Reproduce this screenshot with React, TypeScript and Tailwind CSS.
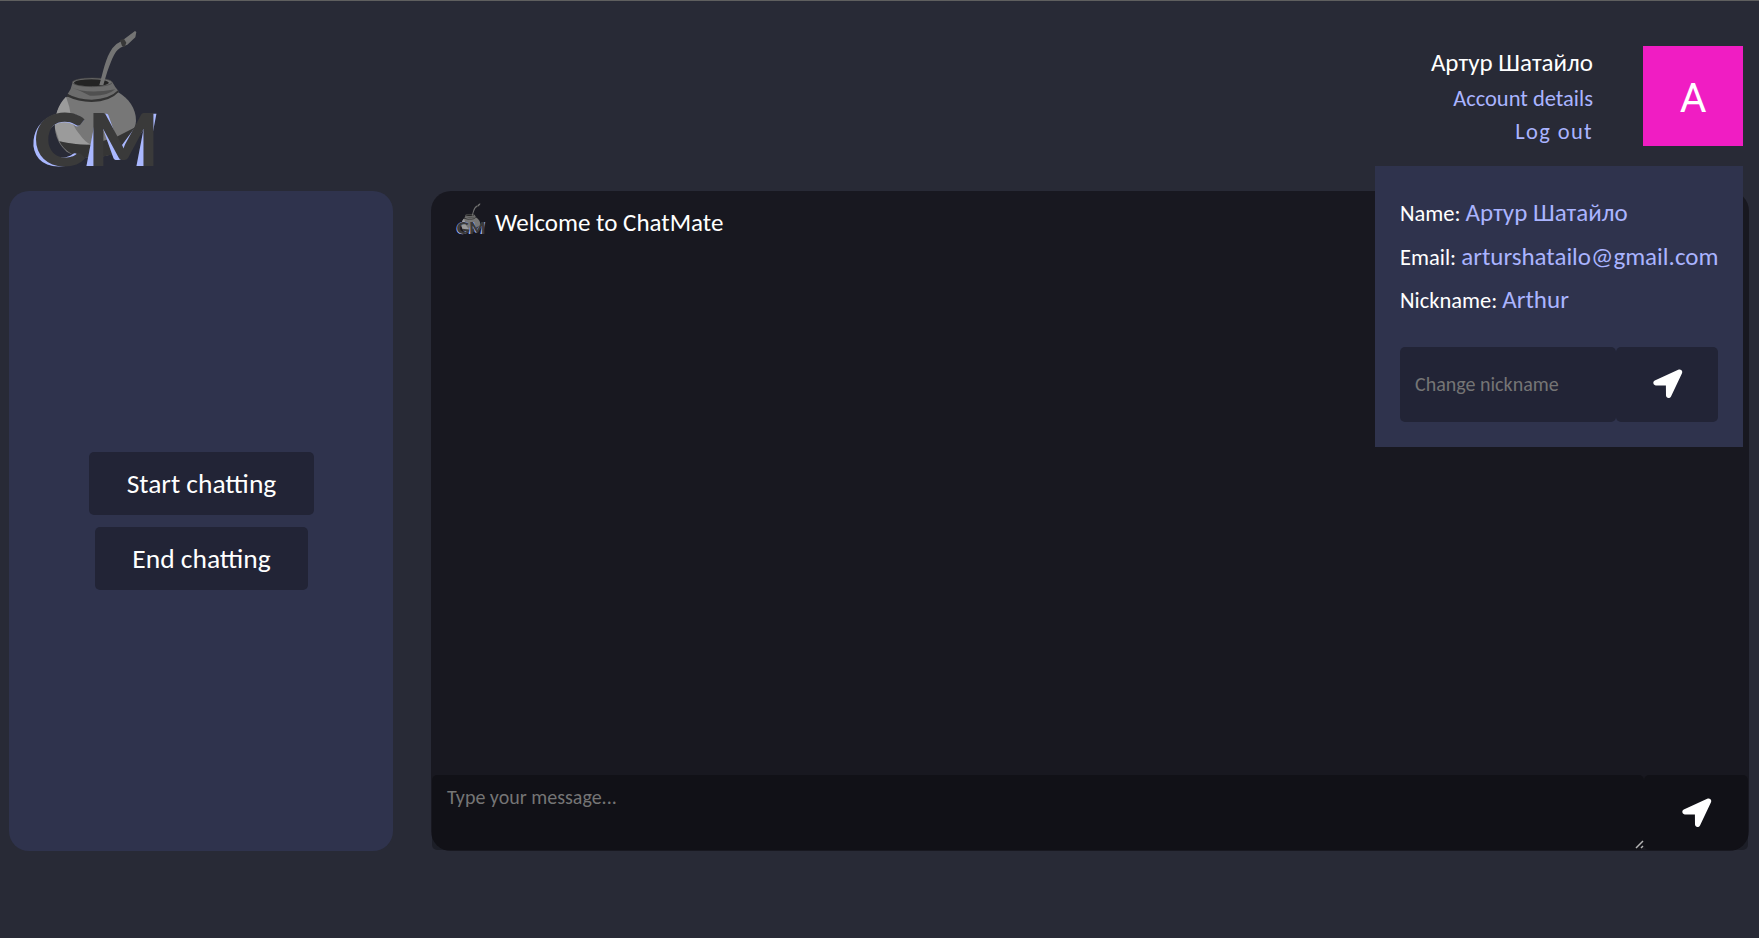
import React from 'react';

function MateLogo({ className }: { className: string }) {
  return (
    <svg viewBox="96 90 372 414" className={className} aria-hidden="true">
      <path d="M200 290 C170 320 160 360 166 395 Q172 430 200 455 C240 480 330 480 370 440 Q408 400 408 362 C408 325 385 295 355 277 Z" fill="#777" />
      <path d="M198 290 Q163 325 165 385 L178 424 Q230 436 274 434 Q258 430 238 402 Q216 375 213 350 Q210 320 198 290 Z" fill="#9b9b9b" />
      <path d="M178 424 Q230 436 272 434 L350 410 L406 382 Q395 436 350 460 Q270 484 215 462 Q190 448 178 424 Z" fill="#353535" />
      <path d="M218 247 Q214 268 203 282 Q235 305 275 305 Q330 303 356 274 Q345 262 337 246 Z" fill="#6c6c6c" />
      <path d="M203 282 Q235 299 275 299 Q330 297 354 271 L356 276 Q330 305 275 306 Q235 306 200 289 Z" fill="#333" />
      <path d="M213 262 Q260 284 346 268 Q320 290 270 287 Q245 274 213 262 Z" fill="#505050" />
      <ellipse cx="277" cy="247" rx="60" ry="13" fill="#707070" stroke="#444" strokeWidth="2" />
      <ellipse cx="274" cy="248" rx="52" ry="10.5" fill="#242424" />
      <path d="M298 255 C310 215 316 175 337 145 Q348 130 365 123 L405 93 L409 96 L406 112 L382 134 Q357 142 348 155 C332 180 320 220 310 255 Z" fill="#747474" />
      <path d="M360 120 L372 117 L379 128 L374 141 L366 138 Z" fill="#383838" />
      <g fontFamily="Lato" fontWeight="900" fontSize="216">
        <g fill="#aab8ff">
          <text transform="translate(-16 497) skewX(-6.2)" x="100" y="0" textLength="158" lengthAdjust="spacingAndGlyphs">C</text>
          <text transform="translate(-21 497) skewX(-10.9)" x="263" y="0" textLength="214" lengthAdjust="spacingAndGlyphs">M</text>
        </g>
        <g fill="#3a3a3a">
          <text x="100" y="497" textLength="158" lengthAdjust="spacingAndGlyphs">C</text>
          <text x="263" y="497" textLength="214" lengthAdjust="spacingAndGlyphs">M</text>
        </g>
      </g>
    </svg>
  );
}

function SendIcon() {
  return (
    <svg viewBox="0 0 30 30" className="size-[30px]" aria-hidden="true">
      <path d="M25.2 .8 L1.8 11.4 C-.6 12.7 .1 16.3 2.7 16.4 L12.9 16.6 L13 26.6 C13.2 29.5 16.7 29.9 18 27.4 L29 4.2 C30 1.6 27.6 -.3 25.2 .8 Z" fill="white" />
    </svg>
  );
}

function Detail({ label, value }: { label: string; value: string }) {
  return (
    <p className="h-[43.5px] whitespace-nowrap text-[25px] leading-[43.5px] text-[#aab4ff]">
      <span className="text-[22.5px] text-white">{label}{' '}</span>
      {value}
    </p>
  );
}

export default function App() {
  return (
    <div className="h-[938px] overflow-hidden border-t border-[#5f5f5f] bg-[#282a36] font-['Carlito','Calibri','Lato',sans-serif] text-white">
      <header className="flex h-[190px] items-start justify-between pl-8 pr-4 pt-[29px]">
        <MateLogo className="h-[138px] w-[124px] overflow-visible" />
        <div className="relative flex gap-[50px] pt-4">
          <div className="-mt-px flex flex-col items-end">
            <p className="h-9 text-[25px] leading-[35px]">Артур Шатайло</p>
            <a className="h-[33px] text-[22.5px] leading-[35px] text-[#aab4ff]">Account details</a>
            <a className="text-[22.5px] leading-[35px] tracking-[1.35px] text-[#aab4ff]">Log out</a>
          </div>
          <div className="flex size-[100px] items-center justify-center bg-[#f01dc3] pt-[5px] font-['Roboto',sans-serif] text-[41px]">A</div>
          <section className="absolute right-0 top-[136px] z-10 h-[281px] w-[368px] bg-[#2f334d] px-[25px] pt-[25px]">
            <Detail label="Name:" value="Артур Шатайло" />
            <Detail label="Email:" value="arturshatailo@gmail.com" />
            <Detail label="Nickname:" value="Arthur" />
            <form className="mt-[25.5px] flex h-[75px]">
              <input placeholder="Change nickname" className="w-[216px] rounded-[5px] bg-[#222436] pb-0.5 pl-[15px] text-[20px] outline-none placeholder:text-[#757575]" />
              <button type="button" className="flex flex-1 items-center justify-center rounded-[5px] bg-[#222436] pb-0.5 pl-px">
                <SendIcon />
              </button>
            </form>
          </section>
        </div>
      </header>

      <main className="flex h-[660px] gap-[38px] pl-[9px] pr-[10px]">
        <aside className="flex w-[384px] flex-col items-center justify-center gap-3 rounded-[20px] bg-[#2f334d] pl-px">
          <button className="h-[63px] w-[225px] rounded-[5px] bg-[#222436] text-[27.5px]">Start chatting</button>
          <button className="h-[63px] w-[213px] rounded-[5px] bg-[#222436] text-[27.5px]">End chatting</button>
        </aside>
        <section className="flex flex-1 flex-col justify-between rounded-[20px] bg-[#181820] px-px">
          <div className="flex items-start pl-6 pt-3">
            <MateLogo className="h-8 w-[29px] overflow-visible" />
            <h1 className="ml-2.5 text-[25px] leading-10">Welcome to ChatMate</h1>
          </div>
          <form className="mb-px flex h-[75px]">
            <div className="relative w-[1212px]">
              <textarea placeholder="Type your message..." className="block size-full resize-none rounded-[5px] bg-black/28 px-[15px] py-2.5 text-[20px] leading-6 outline-none placeholder:text-[#757575]" />
              <svg viewBox="0 0 9 9" className="absolute bottom-px right-0 size-[9px]" aria-hidden="true">
                <path d="M1 8 L8 1 M6 8 L8 6" stroke="#b5b5b5" strokeWidth="1.5" />
              </svg>
            </div>
            <button type="button" className="flex flex-1 items-center justify-center rounded-[5px] bg-black/28 pl-px">
              <SendIcon />
            </button>
          </form>
        </section>
      </main>
    </div>
  );
}
